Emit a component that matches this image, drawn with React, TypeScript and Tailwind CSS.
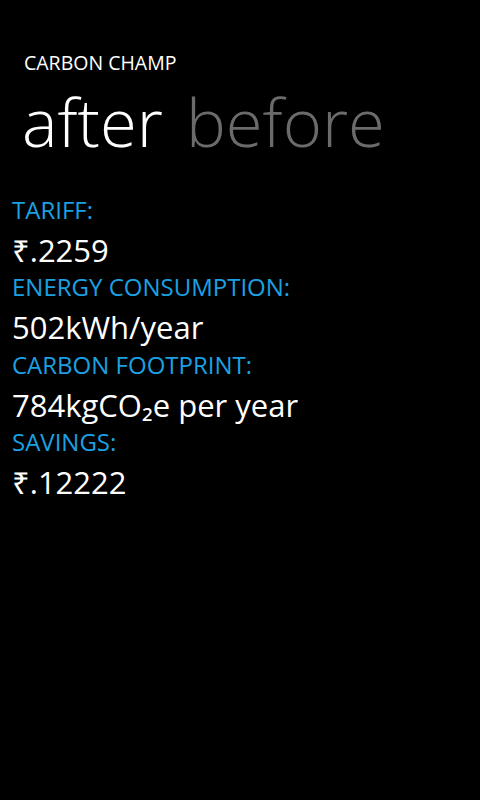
export default function App() {
  const rows = [
    { label: 'TARIFF:', value: '₹.2259' },
    { label: 'ENERGY CONSUMPTION:', value: '502kWh/year' },
    { label: 'CARBON FOOTPRINT:', value: '784kgCO₂e per year' },
    { label: 'SAVINGS:', value: '₹.12222' },
  ];

  return (
    <div className="w-[480px] h-[800px] bg-black text-white overflow-hidden font-['Open_Sans','Noto_Sans',sans-serif]">
      {/* title */}
      <div className="pt-[52.7px] pl-[24px] text-[19.5px] leading-[19.5px]">CARBON CHAMP</div>

      {/* pivot headers */}
      <div className="flex gap-[23px] pl-[22px] mt-[3.3px] text-[67px] leading-[92px] font-light">
        <span className="text-white">after</span>
        <span className="text-[#6b6b6b]">before</span>
      </div>

      {/* details */}
      <div className="flex flex-col pl-[12px] mt-[26.2px]">
        {rows.map((r) => (
          <div key={r.label} className="flex flex-col">
            <div className="text-[#1ba1e2] text-[24px] leading-[32px]">{r.label}</div>
            <div className="pt-[3px] text-[31px] leading-[42.5px]">{r.value}</div>
          </div>
        ))}
      </div>
    </div>
  );
}
